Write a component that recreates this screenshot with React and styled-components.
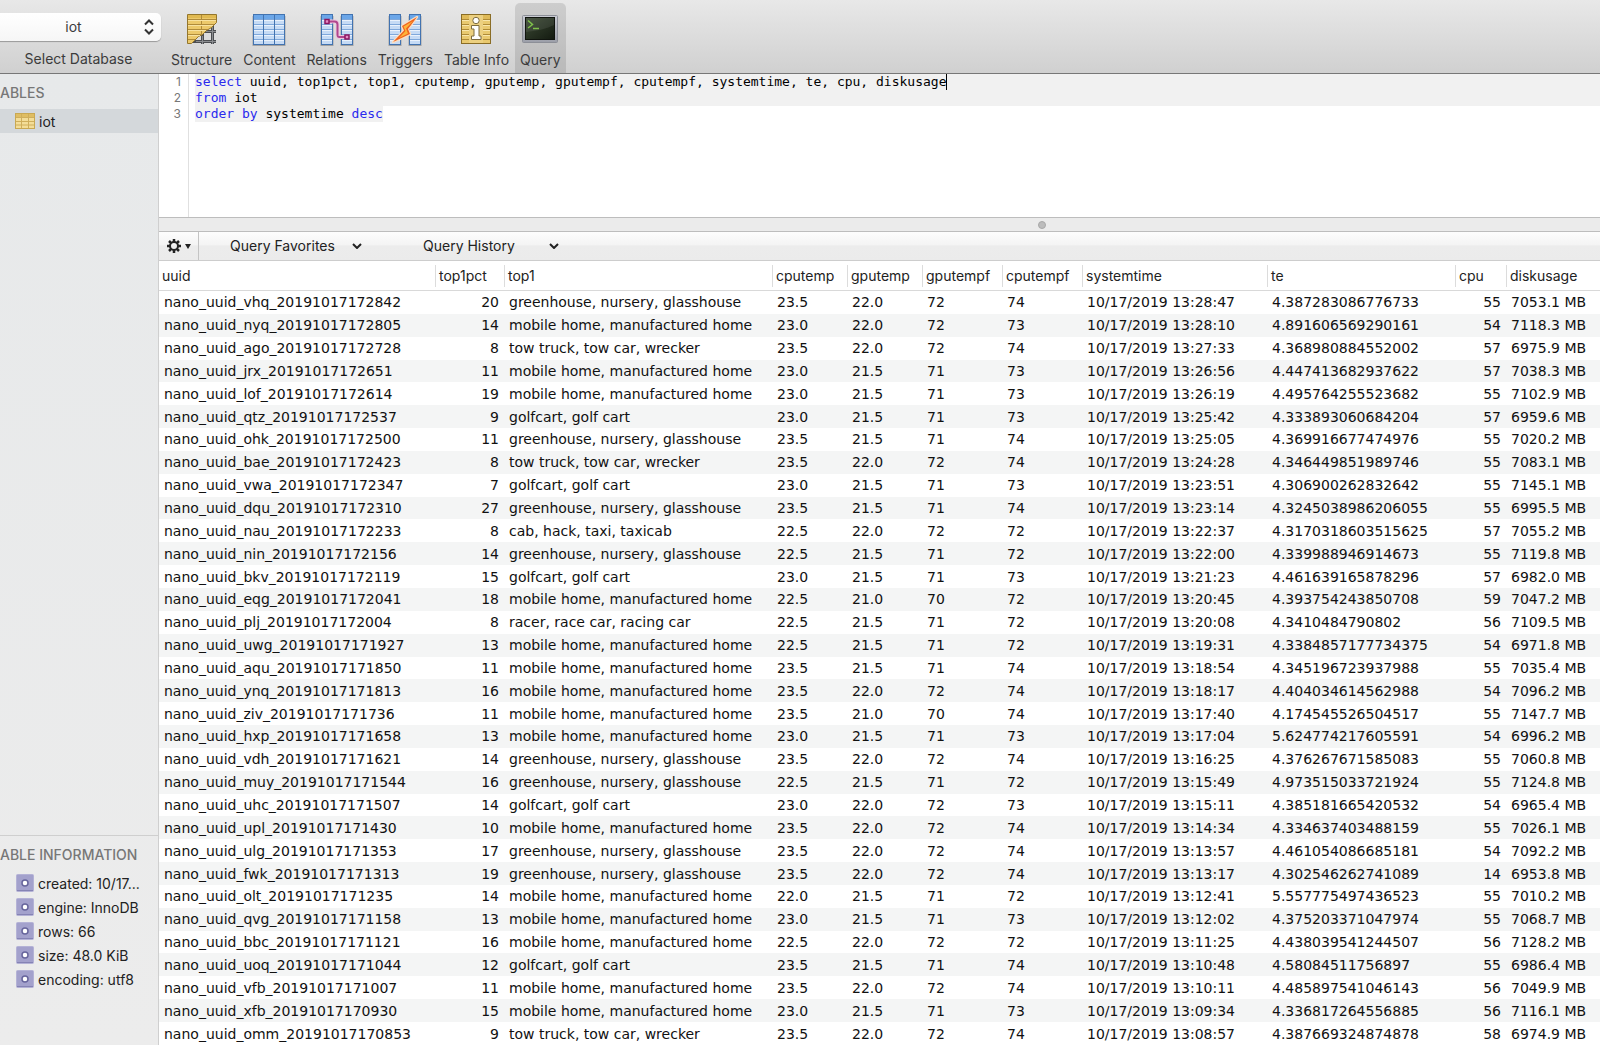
import React, { useState } from 'react';
import styled, { createGlobalStyle } from 'styled-components';

const QUERY = `select uuid, top1pct, top1, cputemp, gputemp, gputempf, cputempf, systemtime, te, cpu, diskusage
from iot
order by systemtime desc`;

const KEYWORDS = ['select', 'from', 'order', 'by', 'desc'];

const COLUMNS = [
  { name: 'uuid', width: 276 },
  { name: 'top1pct', width: 69, right: true },
  { name: 'top1', width: 268 },
  { name: 'cputemp', width: 75 },
  { name: 'gputemp', width: 75 },
  { name: 'gputempf', width: 80 },
  { name: 'cputempf', width: 80 },
  { name: 'systemtime', width: 185 },
  { name: 'te', width: 188 },
  { name: 'cpu', width: 51, right: true },
  { name: 'diskusage' },
];

const GREEN = 'greenhouse, nursery, glasshouse';
const MOBILE = 'mobile home, manufactured home';
const TOW = 'tow truck, tow car, wrecker';
const GOLF = 'golfcart, golf cart';

// id, top1pct, top1, cputemp, gputemp, gputempf, cputempf, time, te, cpu, diskusage
const ROWS = [
  ['vhq_20191017172842', 20, GREEN, '23.5', '22.0', 72, 74, '13:28:47', '4.387283086776733', 55, '7053.1'],
  ['nyq_20191017172805', 14, MOBILE, '23.0', '22.0', 72, 73, '13:28:10', '4.891606569290161', 54, '7118.3'],
  ['ago_20191017172728', 8, TOW, '23.5', '22.0', 72, 74, '13:27:33', '4.368980884552002', 57, '6975.9'],
  ['jrx_20191017172651', 11, MOBILE, '23.0', '21.5', 71, 73, '13:26:56', '4.447413682937622', 57, '7038.3'],
  ['lof_20191017172614', 19, MOBILE, '23.0', '21.5', 71, 73, '13:26:19', '4.495764255523682', 55, '7102.9'],
  ['qtz_20191017172537', 9, GOLF, '23.0', '21.5', 71, 73, '13:25:42', '4.333893060684204', 57, '6959.6'],
  ['ohk_20191017172500', 11, GREEN, '23.5', '21.5', 71, 74, '13:25:05', '4.369916677474976', 55, '7020.2'],
  ['bae_20191017172423', 8, TOW, '23.5', '22.0', 72, 74, '13:24:28', '4.346449851989746', 55, '7083.1'],
  ['vwa_20191017172347', 7, GOLF, '23.0', '21.5', 71, 73, '13:23:51', '4.306900262832642', 55, '7145.1'],
  ['dqu_20191017172310', 27, GREEN, '23.5', '21.5', 71, 74, '13:23:14', '4.3245038986206055', 55, '6995.5'],
  ['nau_20191017172233', 8, 'cab, hack, taxi, taxicab', '22.5', '22.0', 72, 72, '13:22:37', '4.3170318603515625', 57, '7055.2'],
  ['nin_20191017172156', 14, GREEN, '22.5', '21.5', 71, 72, '13:22:00', '4.339988946914673', 55, '7119.8'],
  ['bkv_20191017172119', 15, GOLF, '23.0', '21.5', 71, 73, '13:21:23', '4.461639165878296', 57, '6982.0'],
  ['eqg_20191017172041', 18, MOBILE, '22.5', '21.0', 70, 72, '13:20:45', '4.393754243850708', 59, '7047.2'],
  ['plj_20191017172004', 8, 'racer, race car, racing car', '22.5', '21.5', 71, 72, '13:20:08', '4.3410484790802', 56, '7109.5'],
  ['uwg_20191017171927', 13, MOBILE, '22.5', '21.5', 71, 72, '13:19:31', '4.3384857177734375', 54, '6971.8'],
  ['aqu_20191017171850', 11, MOBILE, '23.5', '21.5', 71, 74, '13:18:54', '4.345196723937988', 55, '7035.4'],
  ['ynq_20191017171813', 16, MOBILE, '23.5', '22.0', 72, 74, '13:18:17', '4.404034614562988', 54, '7096.2'],
  ['ziv_20191017171736', 11, MOBILE, '23.5', '21.0', 70, 74, '13:17:40', '4.174545526504517', 55, '7147.7'],
  ['hxp_20191017171658', 13, MOBILE, '23.0', '21.5', 71, 73, '13:17:04', '5.624774217605591', 54, '6996.2'],
  ['vdh_20191017171621', 14, GREEN, '23.5', '22.0', 72, 74, '13:16:25', '4.376267671585083', 55, '7060.8'],
  ['muy_20191017171544', 16, GREEN, '22.5', '21.5', 71, 72, '13:15:49', '4.973515033721924', 55, '7124.8'],
  ['uhc_20191017171507', 14, GOLF, '23.0', '22.0', 72, 73, '13:15:11', '4.385181665420532', 54, '6965.4'],
  ['upl_20191017171430', 10, MOBILE, '23.5', '22.0', 72, 74, '13:14:34', '4.334637403488159', 55, '7026.1'],
  ['ulg_20191017171353', 17, GREEN, '23.5', '22.0', 72, 74, '13:13:57', '4.461054086685181', 54, '7092.2'],
  ['fwk_20191017171313', 19, GREEN, '23.5', '22.0', 72, 74, '13:13:17', '4.302546262741089', 14, '6953.8'],
  ['olt_20191017171235', 14, MOBILE, '22.0', '21.5', 71, 72, '13:12:41', '5.557775497436523', 55, '7010.2'],
  ['qvg_20191017171158', 13, MOBILE, '23.0', '21.5', 71, 73, '13:12:02', '4.375203371047974', 55, '7068.7'],
  ['bbc_20191017171121', 16, MOBILE, '22.5', '22.0', 72, 72, '13:11:25', '4.438039541244507', 56, '7128.2'],
  ['uoq_20191017171044', 12, GOLF, '23.5', '21.5', 71, 74, '13:10:48', '4.58084511756897', 55, '6986.4'],
  ['vfb_20191017171007', 11, MOBILE, '23.5', '22.0', 72, 74, '13:10:11', '4.485897541046143', 56, '7049.9'],
  ['xfb_20191017170930', 15, MOBILE, '23.0', '21.5', 71, 73, '13:09:34', '4.336817264556885', 56, '7116.1'],
  ['omm_20191017170853', 9, TOW, '23.5', '22.0', 72, 74, '13:08:57', '4.387669324874878', 58, '6974.9'],
].map((r) => [
  `nano_uuid_${r[0]}`,
  ...r.slice(1, 7),
  `10/17/2019 ${r[7]}`,
  r[8],
  r[9],
  `${r[10]} MB`,
]);

const INFO = ['created: 10/17...', 'engine: InnoDB', 'rows: 66', 'size: 48.0 KiB', 'encoding: utf8'];

const StructureIcon = () => (
  <svg width='38' height='34' viewBox='0 0 38 34'>
    <g stroke='#4c4e51' strokeWidth='3' fill='none'>
      <path d='M22 18.5h11M10 28.5h23M19.5 20v11M29.5 13v18' />
    </g>
    <g stroke='#8b8d90' strokeWidth='1' fill='none'>
      <path d='M23 18.5h10M13 28.5h20M19.5 23v8M29.5 14v17' />
    </g>
    <path d='M4.5 1.5h29v8l-5 5-5 3-4 4-4 2-4 4-3 3h-4z' fill='#ecc96b' stroke='#94762c' />
    <path d='M5 2h28v3H5z' fill='#e0b951' />
    <path d='M5 6.500h28M5 11.5h26M5 16.5h20M5 21.5h14M5 26.5h7M18.5 2v19' stroke='#b08b3a' fill='none' />
    <path d='M5 7.5h28M5 12.5h25M5 17.5h18M5 22.5h12' stroke='#f7e2a0' fill='none' />
  </svg>
);

const TableStrip = ({ x, width, cols = [] }) => (
  <g>
    <rect x={x - 0.5} y='3' width={width + 1} height='30' fill='#00000040' />
    <rect x={x + 0.5} y='1.5' width={width - 1} height='30' fill='#eaf2fc' stroke='#4273b0' />
    <rect x={x + 1} y='2' width={width - 2} height='4' fill='#6ba6e8' />
    {[6, 11, 16, 21, 26].map((y) => (
      <rect key={y} x={x + 1} y={y + 2} width={width - 2} height='3' fill='#c6dbf5' />
    ))}
    {[6, 11, 16, 21, 26].map((y) => (
      <rect key={y} x={x + 1} y={y} width={width - 2} height='1' fill='#7fa8db' />
    ))}
    {cols.map((c) => (
      <rect key={c} x={c} y='2' width='1' height='29' fill='#4273b0' />
    ))}
  </g>
);

const ContentIcon = () => (
  <svg width='38' height='34' viewBox='0 0 38 34'>
    <TableStrip x={3} width={32} cols={[13, 24]} />
  </svg>
);

const RelationsIcon = () => (
  <svg width='38' height='34' viewBox='0 0 38 34'>
    <TableStrip x={3} width={12} />
    <TableStrip x={23} width={12} />
    <path d='M9 8.5h7.500c2 0 3 1 3 3v10c0 2 0 2.500 2 2.500H29' fill='none' stroke='#ecc6de' strokeWidth='4' />
    <path d='M9 8.5h7.500c2 0 3 1 3 3v10c0 2 0 2.500 2 2.500H29' fill='none' stroke='#b0468e' strokeWidth='2' />
    <rect x='7' y='6.5' width='4' height='4' fill='#e48cc4' stroke='#8c1560' strokeWidth='1.5' />
    <rect x='27' y='22' width='4' height='4' fill='#e48cc4' stroke='#8c1560' strokeWidth='1.5' />
  </svg>
);

const TriggersIcon = () => (
  <svg width='38' height='34' viewBox='0 0 38 34'>
    <TableStrip x={3} width={12} />
    <TableStrip x={23} width={12} />
    <path
      d='M31 4L16 13l2 4.5L7 29l17-8-2-5z'
      fill='#f0641e'
      stroke='#f9dfc4'
      strokeWidth='2.5'
      strokeLinejoin='round'
      paintOrder='stroke'
    />
    <path d='M27 8l-9.500 5.500 2 4.500L13 25l9-4.500-2-5z' fill='#fdb43a' />
  </svg>
);

const TableInfoIcon = () => (
  <svg width='38' height='34' viewBox='0 0 38 34'>
    <rect x='4.5' y='1.5' width='29' height='29' fill='#e9c96f' stroke='#8a6d26' />
    <rect x='5' y='2' width='28' height='4' fill='#dfba58' />
    <path d='M5 6.5h28M5 11.5h28M5 16.5h28M5 21.5h28M5 26.5h28' stroke='#b08b36' />
    <path d='M5 7.5h28M5 12.5h28M5 17.5h28M5 22.5h28' stroke='#f8e6ab' />
    <path d='M12 2h14v28H12z' fill='#ecd080' />
    <g fill='#fff' stroke='#7d6c40' strokeWidth='1'>
      <circle cx='19' cy='7.500' r='3.2' />
      <path d='M14.5 12.5h7.500v10.500h2v3.500H14.5v-3.500H17v-7h-2.500z' />
    </g>
  </svg>
);

const QueryIcon = () => (
  <svg width='38' height='34' viewBox='0 0 38 34'>
    <defs>
      <linearGradient id='frame' x1='0' y1='0' x2='0' y2='1'>
        <stop offset='0' stopColor='#c9cbd3' />
        <stop offset='1' stopColor='#9b9ea8' />
      </linearGradient>
      <linearGradient id='screen' x1='0' y1='0' x2='1' y2='1'>
        <stop offset='0' stopColor='#3c4a35' />
        <stop offset='1' stopColor='#131a10' />
      </linearGradient>
    </defs>
    <rect x='1.5' y='2.5' width='35' height='27' rx='1' fill='url(#frame)' stroke='#8c8f97' />
    <rect x='4.5' y='4.5' width='29' height='22' fill='url(#screen)' stroke='#10140e' />
    <path d='M5 19c10-1 20-3 28-7V5H5z' fill='#ffffff14' />
    <path d='M7 7.500l4.500 4L7 15M12 15.5h6' fill='none' stroke='#7fc04b' strokeWidth='1.5' />
  </svg>
);

const TABS = [
  ['Structure', StructureIcon],
  ['Content', ContentIcon],
  ['Relations', RelationsIcon],
  ['Triggers', TriggersIcon],
  ['Table Info', TableInfoIcon],
  ['Query', QueryIcon],
];

const TableGlyph = () => (
  <svg width='20' height='16' viewBox='0 0 20 16'>
    <rect x='.5' y='.5' width='19' height='15' fill='#f3dd98' stroke='#c9a852' />
    <path d='M1 1h18v3H1z' fill='#dfbd62' />
    <path d='M1 4.5h18M1 8.5h18M1 12h18M6.5 1v14M13.5 1v14' stroke='#cfae5b' />
  </svg>
);

const PropertyGlyph = () => (
  <svg width='18' height='18' viewBox='0 0 18 18'>
    <rect x='.5' y='.5' width='17' height='17' rx='1' fill='#a3a1cc' stroke='#b4b2d6' />
    <path d='M1 16.5h16' stroke='#8583b4' />
    <circle cx='9' cy='9' r='3' fill='#fff' stroke='#67659c' strokeWidth='1.5' />
  </svg>
);

const GearGlyph = () => (
  <svg width='26' height='16' viewBox='0 0 26 16'>
    <circle cx='7' cy='8' r='4' fill='none' stroke='#222' strokeWidth='2' />
    <path
      d='M7 1v3M7 12v3M0 8h3M11 8h3M2 3l2.200 2.200M9.800 10.800L12 13M2 13l2.200-2.200M9.800 5.200L12 3'
      stroke='#222'
      strokeWidth='2.5'
    />
    <path d='M18 6h6l-3 5z' fill='#222' />
  </svg>
);

const Chevron = () => (
  <svg width='10' height='6' viewBox='0 0 10 6'>
    <path d='M1 1l4 4 4-4' fill='none' stroke='#222' strokeWidth='2' />
  </svg>
);

const Stepper = () => (
  <svg width='10' height='16' viewBox='0 0 10 16'>
    <path d='M1 5.5l4-4 4 4M1 10.5l4 4 4-4' fill='none' stroke='#333' strokeWidth='2' />
  </svg>
);

const highlight = (line) =>
  line.split(' ').map((word, i) => (
    <React.Fragment key={i}>
      {i > 0 && ' '}
      {KEYWORDS.includes(word) ? <Keyword>{word}</Keyword> : word}
    </React.Fragment>
  ));

const App = () => {
  const [tab, setTab] = useState('Query');
  const [query, setQuery] = useState(QUERY);
  const lines = query.split('\n');

  return (
    <>
      <GlobalStyle />
      <Window>
        <Toolbar>
          <Database>
            <DatabaseField>
              <DatabaseSelect id='database'>
                <option>iot</option>
              </DatabaseSelect>
              <SelectMark>
                <Stepper />
              </SelectMark>
            </DatabaseField>
            <DatabaseLabel htmlFor='database'>Select Database</DatabaseLabel>
          </Database>
          <Tabs>
            {TABS.map(([name, Icon]) => (
              <Tab key={name} $active={tab === name} onClick={() => setTab(name)}>
                <Icon />
                {name}
              </Tab>
            ))}
          </Tabs>
        </Toolbar>

        <Body>
          <Sidebar>
            <Tables>
              <SideTitle>ABLES</SideTitle>
              <TableLink href='#iot'>
                <TableGlyph />
                iot
              </TableLink>
            </Tables>
            <Info>
              <SideTitle>ABLE INFORMATION</SideTitle>
              <ul>
                {INFO.map((item) => (
                  <InfoItem key={item}>
                    <PropertyGlyph />
                    {item}
                  </InfoItem>
                ))}
              </ul>
            </Info>
          </Sidebar>

          <Main>
            <Editor>
              <Gutter>
                {lines.map((_, i) => (
                  <span key={i}>{i + 1}</span>
                ))}
              </Gutter>
              <Code>
                <Highlighted aria-hidden='true'>
                  {lines.map((line, i) => (
                    <Line key={i} $last={i === lines.length - 1}>
                      {highlight(line)}
                      {i === 0 && <Caret />}
                    </Line>
                  ))}
                </Highlighted>
                <CodeInput
                  aria-label='SQL query'
                  spellCheck={false}
                  value={query}
                  onChange={(e) => setQuery(e.target.value)}
                />
              </Code>
            </Editor>

            <Splitter>
              <Knob />
            </Splitter>

            <QueryBar>
              <GearButton aria-label='Query actions'>
                <GearGlyph />
              </GearButton>
              <Pulldown $width={132}>
                <PulldownSelect aria-label='Query Favorites'>
                  <option>Query Favorites</option>
                </PulldownSelect>
                <PulldownMark>
                  <Chevron />
                </PulldownMark>
              </Pulldown>
              <Pulldown $width={136}>
                <PulldownSelect aria-label='Query History'>
                  <option>Query History</option>
                </PulldownSelect>
                <PulldownMark>
                  <Chevron />
                </PulldownMark>
              </Pulldown>
            </QueryBar>

            <Results>
              <ResultTable>
                <colgroup>
                  {COLUMNS.map((c) => (
                    <Col key={c.name} $width={c.width} />
                  ))}
                </colgroup>
                <thead>
                  <tr>
                    {COLUMNS.map((c, i) => (
                      <Th key={c.name}>
                        <ThLabel $first={i === 0}>{c.name}</ThLabel>
                      </Th>
                    ))}
                  </tr>
                </thead>
                <tbody>
                  {ROWS.map((row) => (
                    <Row key={row[0]}>
                      {row.map((cell, i) => (
                        <Td key={i} $right={COLUMNS[i].right}>
                          {cell}
                        </Td>
                      ))}
                    </Row>
                  ))}
                </tbody>
              </ResultTable>
            </Results>
          </Main>
        </Body>
      </Window>
    </>
  );
};

const GlobalStyle = createGlobalStyle`
  * {
    box-sizing: border-box;
  }
  body {
    margin: 0;
    font-family: Inter, 'Liberation Sans', sans-serif;
    font-size: 14px;
    color: #222;
    background: #fff;
  }
  button, select, textarea {
    font: inherit;
    color: inherit;
    border: none;
    background: none;
    margin: 0;
    padding: 0;
    outline: none;
  }
  ul {
    list-style: none;
    margin: 0;
    padding: 0;
  }
  svg {
    display: block;
    flex: none;
  }
`;

const Window = styled.div`
  height: 100vh;
  display: flex;
  flex-direction: column;
  overflow: hidden;
`;

const Toolbar = styled.header`
  flex: none;
  display: flex;
  height: 74px;
  background: linear-gradient(#e8e8e8, #d0d0d0);
  border-bottom: 1px solid #777;
  color: #3c3c3c;
`;

/* the popup runs off the left edge of the window */
const Database = styled.div`
  width: 171px;
  margin-left: -10px;
  padding-top: 13px;
  display: flex;
  flex-direction: column;
  align-items: center;
  gap: 8px;
  line-height: 20px;
`;

const DatabaseField = styled.div`
  position: relative;
  width: 100%;
`;

const DatabaseSelect = styled.select`
  appearance: none;
  display: block;
  width: 100%;
  height: 28px;
  padding-right: 4px;
  border-radius: 5px;
  background: linear-gradient(#fff, #f6f6f6);
  box-shadow: 0 1px 1px #0000004d;
  text-align: center;
  text-align-last: center;
`;

const DatabaseLabel = styled.label`
  padding-left: 6px;
`;

const SelectMark = styled.span`
  position: absolute;
  top: 6px;
  right: 7px;
  pointer-events: none;
`;

const Tabs = styled.nav`
  display: flex;
  gap: 1px;
  margin-left: 5px;
  padding-top: 3px;
`;

const Tab = styled.button`
  display: flex;
  flex-direction: column;
  align-items: center;
  gap: 3px;
  padding: 10px 5px 0;
  line-height: 20px;
  border-radius: 5px 5px 0 0;
  background: ${({ $active }) => ($active ? '#0000001c' : 'none')};
`;

const Body = styled.div`
  flex: 1;
  min-height: 0;
  display: flex;
`;

const Sidebar = styled.aside`
  flex: none;
  width: 159px;
  display: flex;
  flex-direction: column;
  overflow: hidden;
  background: linear-gradient(#e7e9ea, #ececec);
  border-right: 1px solid #cfcfcf;
`;

const Tables = styled.section`
  flex: 1;
`;

const SideTitle = styled.h2`
  margin: 0;
  padding-top: 9px;
  font-size: 14px;
  font-weight: 500;
  line-height: 20px;
  white-space: nowrap;
  color: #777;
`;

const TableLink = styled.a`
  display: flex;
  align-items: center;
  gap: 4px;
  height: 24px;
  margin-top: 6px;
  padding-left: 15px;
  background: #d4d8db;
  color: #222;
  text-decoration: none;
`;

const Info = styled.section`
  min-height: 210px;
  border-top: 1px solid #cfcfcf;

  ul {
    margin-top: 6px;
  }
`;

const InfoItem = styled.li`
  display: flex;
  align-items: center;
  gap: 4px;
  height: 24px;
  padding-left: 16px;
  white-space: nowrap;
`;

const Main = styled.main`
  flex: 1;
  min-width: 0;
  display: flex;
  flex-direction: column;
`;

const Editor = styled.section`
  flex: none;
  display: flex;
  height: 143px;
  font-family: 'DejaVu Sans Mono', monospace;
  font-size: 13px;
  line-height: 16px;
`;

const Gutter = styled.div`
  width: 30px;
  padding-right: 7px;
  display: flex;
  flex-direction: column;
  align-items: flex-end;
  border-right: 1px solid #e0e0e0;
  font-family: Inter, sans-serif;
  font-size: 12px;
  color: #777;
`;

const Code = styled.div`
  position: relative;
  flex: 1;
  margin-left: 6px;
  color: #000;
`;

const Highlighted = styled.div`
  white-space: pre;
`;

const Line = styled.div`
  width: ${({ $last }) => ($last ? 'fit-content' : 'auto')};
  height: 16px;
  background: #f1f1f1;
`;

const Keyword = styled.span`
  color: #2a2aee;
`;

const Caret = styled.i`
  display: inline-block;
  width: 1px;
  height: 16px;
  vertical-align: top;
  background: #000;
`;

/* typed text is painted by Highlighted underneath */
const CodeInput = styled.textarea`
  position: absolute;
  inset: 0;
  width: 100%;
  height: 100%;
  resize: none;
  white-space: pre;
  overflow: hidden;
  color: transparent;
`;

const Splitter = styled.div`
  flex: none;
  height: 15px;
  display: flex;
  align-items: center;
  justify-content: center;
  padding-left: 324px;
  background: #ebebeb;
  border: solid #bdbdbd;
  border-width: 1px 0;
`;

const Knob = styled.span`
  width: 8px;
  height: 8px;
  border-radius: 50%;
  background: #bcbcbc;
  border: 1px solid #a8a8a8;
`;

const QueryBar = styled.div`
  flex: none;
  display: flex;
  align-items: center;
  height: 29px;
  background: linear-gradient(#fdfdfd, #f4f4f4 45%, #ececec 50%, #ebebeb);
  border-bottom: 1px solid #cdcdcd;
`;

const GearButton = styled.button`
  width: 40px;
  height: 100%;
  padding-left: 8px;
  border-right: 1px solid #c4c4c4;
`;

const Pulldown = styled.div`
  position: relative;
  display: flex;
  align-items: center;
  width: ${({ $width }) => $width}px;
  margin-left: 31px;

  & + & {
    margin-left: 61px;
  }
`;

const PulldownSelect = styled.select`
  appearance: none;
  width: 100%;
  height: 24px;
  padding-bottom: 1px;
`;

const PulldownMark = styled.span`
  position: absolute;
  right: 0;
  pointer-events: none;
`;

const Results = styled.section`
  flex: 1;
  min-height: 0;
  overflow: hidden;
`;

const ResultTable = styled.table`
  width: 100%;
  height: 100%;
  table-layout: fixed;
  border-collapse: separate;
  border-spacing: 0;
`;

const Col = styled.col`
  width: ${({ $width }) => ($width ? `${$width}px` : 'auto')};
`;

const Th = styled.th`
  height: 30px;
  padding: 0;
  border-bottom: 1px solid #d9d9d9;
  font-weight: 400;
  text-align: left;
`;

const ThLabel = styled.div`
  padding-left: 3px;
  line-height: 22px;
  border-left: ${({ $first }) => ($first ? 'none' : '1px solid #dcdcdc')};
`;

const Row = styled.tr`
  background: #fff;

  &:nth-child(even) {
    background: #f4f5f5;
  }
`;

const Td = styled.td`
  padding: 0 5px;
  font-family: 'DejaVu Sans', sans-serif;
  line-height: 20px;
  white-space: nowrap;
  color: #111;
  text-align: ${({ $right }) => ($right ? 'right' : 'left')};
`;

export default App;
